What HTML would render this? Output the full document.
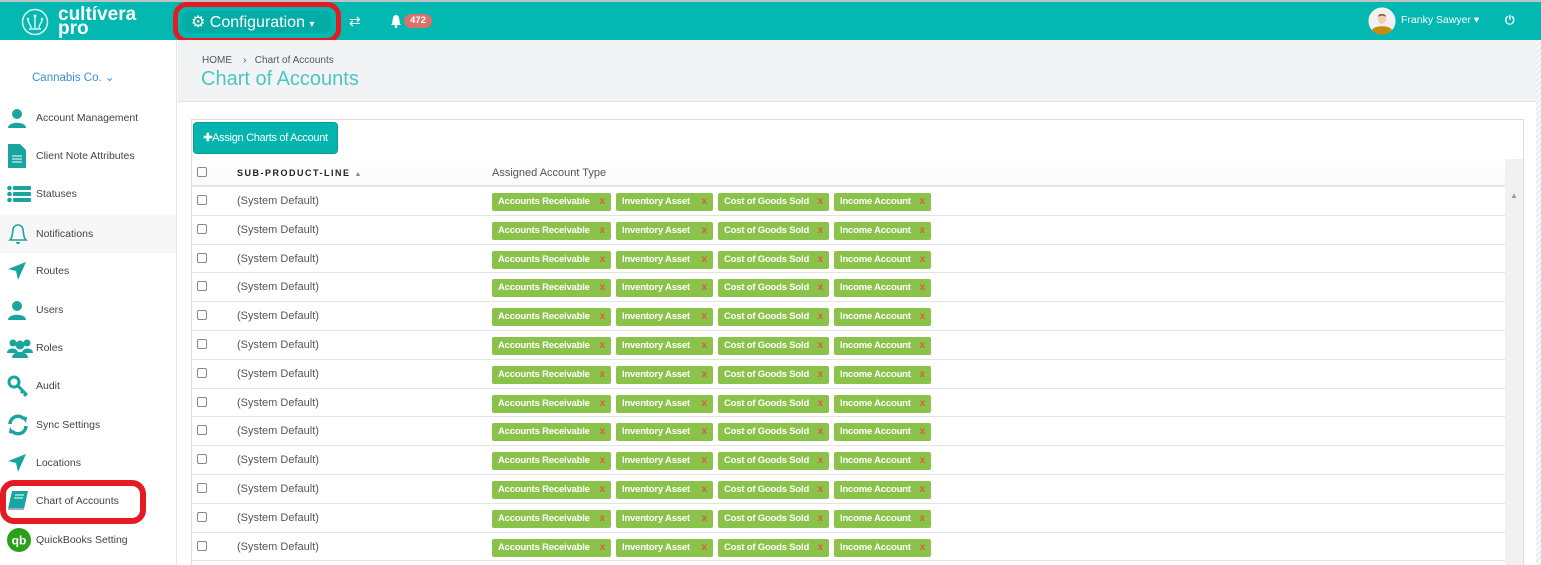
<!DOCTYPE html>
<html><head><meta charset="utf-8"><style>
*{box-sizing:border-box;margin:0;padding:0}
body{width:1541px;height:565px;overflow:hidden;background:#fff;font-family:"Liberation Sans",sans-serif;position:relative}
.top{position:absolute;left:0;top:0;width:1541px;height:40px;background:#03b8b0;border-top:2px solid #b9c4c4}
.abs{position:absolute}
.side{position:absolute;left:0;top:40px;width:177px;height:525px;background:#fff;border-right:1px solid #e6e6e6}
.si{position:absolute;left:0;width:176px;height:38px;font-size:10.5px;color:#444}
.si span{position:absolute;left:36px;top:50%;transform:translateY(-50%)}
.si svg{position:absolute;left:7px;top:50%;transform:translateY(-50%)}
.mainhead{position:absolute;left:178px;top:40px;width:1358px;height:62px;background:#f2f3f5;border-bottom:1px solid #e1e4e8}
.stripe{position:absolute;left:1536px;top:40px;width:5px;height:525px;background:repeating-linear-gradient(135deg,#e6eef4 0 2px,#f8fbfd 2px 4px)}
.panel{position:absolute;left:191px;top:119px;width:1333px;height:446px;border:1px solid #dcdcdc;border-bottom:none;background:#fff}
.row{position:absolute;left:192px;width:1313px;height:28.8px;border-bottom:1px solid #e3e3e3}
.cb{position:absolute;left:5px;top:8px;width:10px;height:10px;border:1px solid #888;border-radius:2px;background:#fff}
.sd{position:absolute;left:45px;top:8px;font-size:11px;color:#555}
.tag{position:absolute;top:6px;height:18px;background:#8bc34a;border-radius:2px;color:#fff;font-size:9.5px;font-weight:bold;line-height:18px;padding-left:6px;white-space:nowrap;letter-spacing:-0.2px}
.tag b{color:#e0574b;position:absolute;right:6px;top:0;font-weight:bold;font-size:10px}
</style></head><body>
<div class="top">
  <svg class="abs" style="left:21px;top:6px" width="28" height="28" viewBox="0 0 28 28"><circle cx="14" cy="14" r="12.5" fill="none" stroke="#d8f3f1" stroke-width="1.5"/><path d="M14 21V9M10 20c0-4-3-5-3-8M18 20c0-4 3-5 3-8M8 21h12" stroke="#d8f3f1" stroke-width="1.5" fill="none"/><circle cx="14" cy="8" r="1.5" fill="#d8f3f1"/><circle cx="7" cy="11" r="1.3" fill="#d8f3f1"/><circle cx="21" cy="11" r="1.3" fill="#d8f3f1"/></svg>
  <div class="abs" style="left:58px;top:6px;color:#fff;font-weight:bold;font-size:19px;line-height:14px">cultívera<br>pro</div>
  <div class="abs" style="left:173px;top:0px;width:168px;height:41px;border:5px solid #e31c24;border-radius:14px"></div>
  <div class="abs" style="left:183px;top:9px;width:148px;height:22px;background:#05aca5;border-radius:5px"></div>
  <div class="abs" style="left:191px;top:10px;color:#fff;font-size:16px">⚙ Configuration <span style="font-size:10px">▾</span></div>
  <div class="abs" style="left:349px;top:11px;color:#fff;font-size:14px">⇄</div>
  <svg class="abs" style="left:390px;top:13px" width="12" height="13" viewBox="0 0 12 13"><path d="M1 10c2-2 1-4 2-7a3 3 0 0 1 6 0c1 3 0 5 2 7z" fill="#fff"/><circle cx="6" cy="11.5" r="1.4" fill="#fff"/></svg>
  <div class="abs" style="left:404px;top:12px;width:28px;height:14px;background:#d9726a;border-radius:7px;color:#fff;font-size:9.5px;font-weight:bold;text-align:center;line-height:14px">472</div>
  <svg class="abs" style="left:1368px;top:5px" width="28" height="28" viewBox="0 0 28 28"><circle cx="14" cy="14" r="13" fill="#f1f1f1" stroke="#fff"/><path d="M4 23c2-5 18-5 20 0a13 13 0 0 1-20 0z" fill="#c98a10"/><ellipse cx="14" cy="12" rx="4" ry="5" fill="#f4d0b3"/><path d="M10 10c0-4 8-4 8 0c-2-2-6-2-8 0z" fill="#7a4a2a"/></svg>
  <div class="abs" style="left:1401px;top:12px;color:#fff;font-size:10.5px">Franky Sawyer ▾</div>
  <div class="abs" style="left:1505px;top:11px;color:#fff;font-size:12px;font-weight:bold">⏻</div>
</div>
<div class="side">
  <div class="abs" style="left:32px;top:30px;color:#3d8fd6;font-size:11.5px">Cannabis Co. ⌄</div>
  <div class="si" style="top:59px"><svg width="20" height="20" viewBox="0 0 20 20"><circle cx="10" cy="6" r="5" fill="#18a5a0"/><path d="M1 20c0-7 18-7 18 0z" fill="#18a5a0"/></svg><span>Account Management</span></div>
  <div class="si" style="top:97px"><svg width="20" height="24" viewBox="0 0 20 24"><path d="M1 0h12l6 6v18H1z" fill="#18a5a0"/><path d="M5 12h10M5 15h10M5 18h10" stroke="#fff"/></svg><span>Client Note Attributes</span></div>
  <div class="si" style="top:135px"><svg width="24" height="18" viewBox="0 0 24 18"><g fill="#18a5a0"><circle cx="2.5" cy="3" r="2.3"/><circle cx="2.5" cy="9" r="2.3"/><circle cx="2.5" cy="15" r="2.3"/><rect x="6" y="1" width="18" height="4" rx="1"/><rect x="6" y="7" width="18" height="4" rx="1"/><rect x="6" y="13" width="18" height="4" rx="1"/></g></svg><span>Statuses</span></div>
  <div class="si" style="top:175px;background:#f7f7f7"><svg width="22" height="22" viewBox="0 0 22 22"><path d="M3 17c3-3 2-6 3-10a5 5 0 0 1 10 0c1 4 0 7 3 10z" fill="none" stroke="#18a5a0" stroke-width="1.6"/><path d="M9 19a2 2 0 0 0 4 0" fill="#18a5a0"/></svg><span>Notifications</span></div>
  <div class="si" style="top:212px"><svg width="20" height="20" viewBox="0 0 20 20"><path d="M19 1L1 8l8 2 2 9z" fill="#18a5a0"/></svg><span>Routes</span></div>
  <div class="si" style="top:251px"><svg width="20" height="20" viewBox="0 0 20 20"><circle cx="10" cy="6" r="5" fill="#18a5a0"/><path d="M1 20c0-7 18-7 18 0z" fill="#18a5a0"/></svg><span>Users</span></div>
  <div class="si" style="top:289px"><svg width="26" height="20" viewBox="0 0 26 20"><g fill="#18a5a0"><circle cx="6" cy="5" r="3.5"/><circle cx="20" cy="5" r="3.5"/><circle cx="13" cy="7" r="4.5"/><path d="M0 15c0-6 11-6 11 0zM15 15c0-6 11-6 11 0zM5 20c0-8 16-8 16 0z"/></g></svg><span>Roles</span></div>
  <div class="si" style="top:327px"><svg width="22" height="22" viewBox="0 0 22 22"><circle cx="7" cy="7" r="5" fill="none" stroke="#18a5a0" stroke-width="3"/><path d="M10 10l10 10M16 16l-2 2M19 19l-2 2" stroke="#18a5a0" stroke-width="3"/></svg><span>Audit</span></div>
  <div class="si" style="top:366px"><svg width="22" height="22" viewBox="0 0 22 22"><path d="M3 10a8 8 0 0 1 14-5M19 12a8 8 0 0 1-14 5" fill="none" stroke="#18a5a0" stroke-width="3.5"/><path d="M14 2l6 1-1 6zM8 20l-6-1 1-6z" fill="#18a5a0"/></svg><span>Sync Settings</span></div>
  <div class="si" style="top:404px"><svg width="20" height="20" viewBox="0 0 20 20"><path d="M19 1L1 8l8 2 2 9z" fill="#18a5a0"/></svg><span>Locations</span></div>
  <div class="abs" style="left:0;top:440px;width:146px;height:44px;border:6px solid #e31c24;border-radius:14px;background:#fff"></div>
  <div class="si" style="top:442px"><svg width="22" height="22" viewBox="0 0 22 22"><path d="M5 1h16l-4 18H1z" fill="#18a5a0"/><path d="M8 5h9M7 8h9" stroke="#fff"/><path d="M1 19h16" stroke="#9ad" stroke-width="2"/></svg><span>Chart of Accounts</span></div>
  <div class="si" style="top:481px"><svg width="24" height="24" viewBox="0 0 24 24"><circle cx="12" cy="12" r="12" fill="#2ca01c"/><text x="12" y="16.5" font-size="12" font-weight="bold" fill="#fff" text-anchor="middle" font-family="Liberation Sans">qb</text></svg><span>QuickBooks Setting</span></div>
</div>
<div class="mainhead">
  <div class="abs" style="left:24px;top:15px;font-size:10px;color:#555">HOME &nbsp;&nbsp; <b style="font-weight:normal">›</b> &nbsp;&nbsp;Chart of Accounts</div>
  <div class="abs" style="left:23px;top:28px;font-size:20px;color:#4cc6c0">Chart of Accounts</div>
</div>
<div class="stripe"></div>
<div class="panel"></div>
<div class="abs" style="left:193px;top:122px;width:145px;height:32px;background:#03b5ae;border:1px solid #0a9a94;border-radius:4px;color:#fff;font-size:11px;line-height:30px;text-align:center;letter-spacing:-0.3px"><b>✚</b>Assign Charts of Account</div>
<div class="abs" style="left:192px;top:159px;width:1331px;height:28px;background:linear-gradient(#fff,#fafafa);border-bottom:2px solid #e6e6e6"></div>
<div class="abs" style="left:197px;top:167px;width:10px;height:10px;border:1px solid #888;border-radius:2px"></div>
<div class="abs" style="left:237px;top:168px;font-size:9px;font-weight:bold;letter-spacing:1.5px;color:#222">SUB-PRODUCT-LINE <span style="color:#888;font-size:7px">▲</span></div>
<div class="abs" style="left:492px;top:167px;font-size:11px;color:#555">Assigned Account Type</div>
<div class="abs" style="left:1505px;top:159px;width:18px;height:406px;background:#f1f1f1"></div>
<div class="abs" style="left:1510px;top:191px;font-size:8px;color:#999">▲</div>
<div id="rows">
<div class="row" style="top:187px"><div class="cb"></div><div class="sd">(System Default)</div><div class="tag" style="left:300px;width:119px">Accounts Receivable<b>x</b></div><div class="tag" style="left:424px;width:97px">Inventory Asset<b>x</b></div><div class="tag" style="left:526px;width:111px">Cost of Goods Sold<b>x</b></div><div class="tag" style="left:642px;width:97px">Income Account<b>x</b></div></div>
<div class="row" style="top:215.8px"><div class="cb"></div><div class="sd">(System Default)</div><div class="tag" style="left:300px;width:119px">Accounts Receivable<b>x</b></div><div class="tag" style="left:424px;width:97px">Inventory Asset<b>x</b></div><div class="tag" style="left:526px;width:111px">Cost of Goods Sold<b>x</b></div><div class="tag" style="left:642px;width:97px">Income Account<b>x</b></div></div>
<div class="row" style="top:244.6px"><div class="cb"></div><div class="sd">(System Default)</div><div class="tag" style="left:300px;width:119px">Accounts Receivable<b>x</b></div><div class="tag" style="left:424px;width:97px">Inventory Asset<b>x</b></div><div class="tag" style="left:526px;width:111px">Cost of Goods Sold<b>x</b></div><div class="tag" style="left:642px;width:97px">Income Account<b>x</b></div></div>
<div class="row" style="top:273.4px"><div class="cb"></div><div class="sd">(System Default)</div><div class="tag" style="left:300px;width:119px">Accounts Receivable<b>x</b></div><div class="tag" style="left:424px;width:97px">Inventory Asset<b>x</b></div><div class="tag" style="left:526px;width:111px">Cost of Goods Sold<b>x</b></div><div class="tag" style="left:642px;width:97px">Income Account<b>x</b></div></div>
<div class="row" style="top:302.2px"><div class="cb"></div><div class="sd">(System Default)</div><div class="tag" style="left:300px;width:119px">Accounts Receivable<b>x</b></div><div class="tag" style="left:424px;width:97px">Inventory Asset<b>x</b></div><div class="tag" style="left:526px;width:111px">Cost of Goods Sold<b>x</b></div><div class="tag" style="left:642px;width:97px">Income Account<b>x</b></div></div>
<div class="row" style="top:331px"><div class="cb"></div><div class="sd">(System Default)</div><div class="tag" style="left:300px;width:119px">Accounts Receivable<b>x</b></div><div class="tag" style="left:424px;width:97px">Inventory Asset<b>x</b></div><div class="tag" style="left:526px;width:111px">Cost of Goods Sold<b>x</b></div><div class="tag" style="left:642px;width:97px">Income Account<b>x</b></div></div>
<div class="row" style="top:359.8px"><div class="cb"></div><div class="sd">(System Default)</div><div class="tag" style="left:300px;width:119px">Accounts Receivable<b>x</b></div><div class="tag" style="left:424px;width:97px">Inventory Asset<b>x</b></div><div class="tag" style="left:526px;width:111px">Cost of Goods Sold<b>x</b></div><div class="tag" style="left:642px;width:97px">Income Account<b>x</b></div></div>
<div class="row" style="top:388.6px"><div class="cb"></div><div class="sd">(System Default)</div><div class="tag" style="left:300px;width:119px">Accounts Receivable<b>x</b></div><div class="tag" style="left:424px;width:97px">Inventory Asset<b>x</b></div><div class="tag" style="left:526px;width:111px">Cost of Goods Sold<b>x</b></div><div class="tag" style="left:642px;width:97px">Income Account<b>x</b></div></div>
<div class="row" style="top:417.4px"><div class="cb"></div><div class="sd">(System Default)</div><div class="tag" style="left:300px;width:119px">Accounts Receivable<b>x</b></div><div class="tag" style="left:424px;width:97px">Inventory Asset<b>x</b></div><div class="tag" style="left:526px;width:111px">Cost of Goods Sold<b>x</b></div><div class="tag" style="left:642px;width:97px">Income Account<b>x</b></div></div>
<div class="row" style="top:446.2px"><div class="cb"></div><div class="sd">(System Default)</div><div class="tag" style="left:300px;width:119px">Accounts Receivable<b>x</b></div><div class="tag" style="left:424px;width:97px">Inventory Asset<b>x</b></div><div class="tag" style="left:526px;width:111px">Cost of Goods Sold<b>x</b></div><div class="tag" style="left:642px;width:97px">Income Account<b>x</b></div></div>
<div class="row" style="top:475px"><div class="cb"></div><div class="sd">(System Default)</div><div class="tag" style="left:300px;width:119px">Accounts Receivable<b>x</b></div><div class="tag" style="left:424px;width:97px">Inventory Asset<b>x</b></div><div class="tag" style="left:526px;width:111px">Cost of Goods Sold<b>x</b></div><div class="tag" style="left:642px;width:97px">Income Account<b>x</b></div></div>
<div class="row" style="top:503.8px"><div class="cb"></div><div class="sd">(System Default)</div><div class="tag" style="left:300px;width:119px">Accounts Receivable<b>x</b></div><div class="tag" style="left:424px;width:97px">Inventory Asset<b>x</b></div><div class="tag" style="left:526px;width:111px">Cost of Goods Sold<b>x</b></div><div class="tag" style="left:642px;width:97px">Income Account<b>x</b></div></div>
<div class="row" style="top:532.6px"><div class="cb"></div><div class="sd">(System Default)</div><div class="tag" style="left:300px;width:119px">Accounts Receivable<b>x</b></div><div class="tag" style="left:424px;width:97px">Inventory Asset<b>x</b></div><div class="tag" style="left:526px;width:111px">Cost of Goods Sold<b>x</b></div><div class="tag" style="left:642px;width:97px">Income Account<b>x</b></div></div>
</div>
</body></html>
